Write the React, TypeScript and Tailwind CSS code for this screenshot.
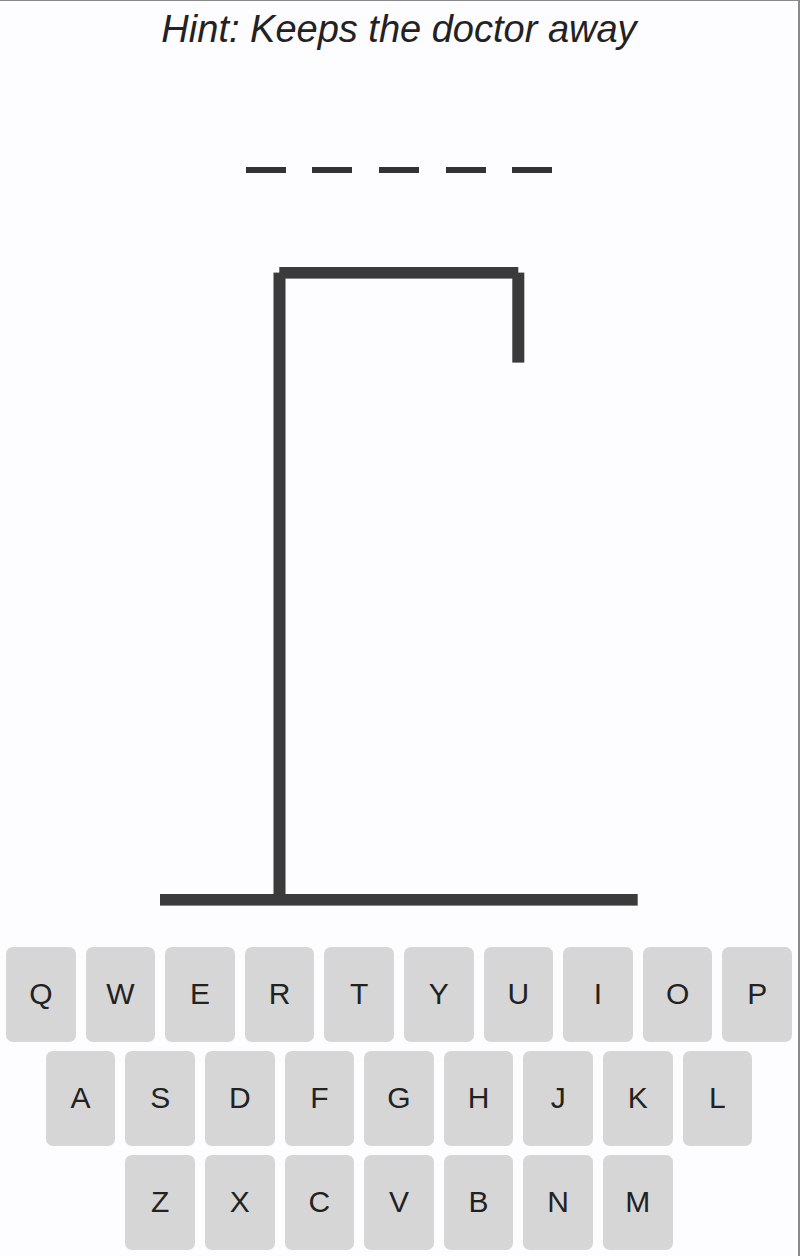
const ROWS = ["QWERTYUIOP", "ASDFGHJKL", "ZXCVBNM"];

function Gallows() {
  return (
    <svg width="478" height="639" viewBox="0 0 478 639" className="mx-auto block" fill="#3b3b3b">
      <rect x="119.3" y="0" width="239" height="11.6" />
      <rect x="113.5" y="5.6" width="12" height="630" />
      <rect x="352.3" y="5.6" width="12" height="90" />
      <rect x="0" y="627" width="477.7" height="11.6" />
    </svg>
  );
}

function Key({ letter }: { letter: string }) {
  return (
    <button className="flex h-[95px] w-[69.6px] items-center justify-center rounded-[7px] bg-[#d6d6d6] text-[30px] leading-none text-[#222]">
      {letter}
    </button>
  );
}

export default function App() {
  return (
    <div
      className="h-[1256px] overflow-hidden border-t border-r-2 border-[#8a8a8a] bg-[#fdfcfe]"
      style={{ fontFamily: '"Liberation Sans", Arial, sans-serif' }}
    >
      <p className="mt-[7px] text-center text-[38px] leading-[1.15] italic text-[#222]">
        Hint: Keeps the doctor away
      </p>

      <div className="mt-[115px] flex h-[6px] justify-center gap-[26.7px]">
        {[0, 1, 2, 3, 4].map((i) => (
          <span key={i} className="h-[6px] w-[40px] bg-[#333]" />
        ))}
      </div>

      <div className="mt-[94px]">
        <Gallows />
      </div>

      <div className="mt-[41px] flex flex-col gap-[9px]">
        {ROWS.map((row) => (
          <div key={row} className="flex justify-center gap-[10px]">
            {row.split("").map((l) => (
              <Key key={l} letter={l} />
            ))}
          </div>
        ))}
      </div>
    </div>
  );
}
